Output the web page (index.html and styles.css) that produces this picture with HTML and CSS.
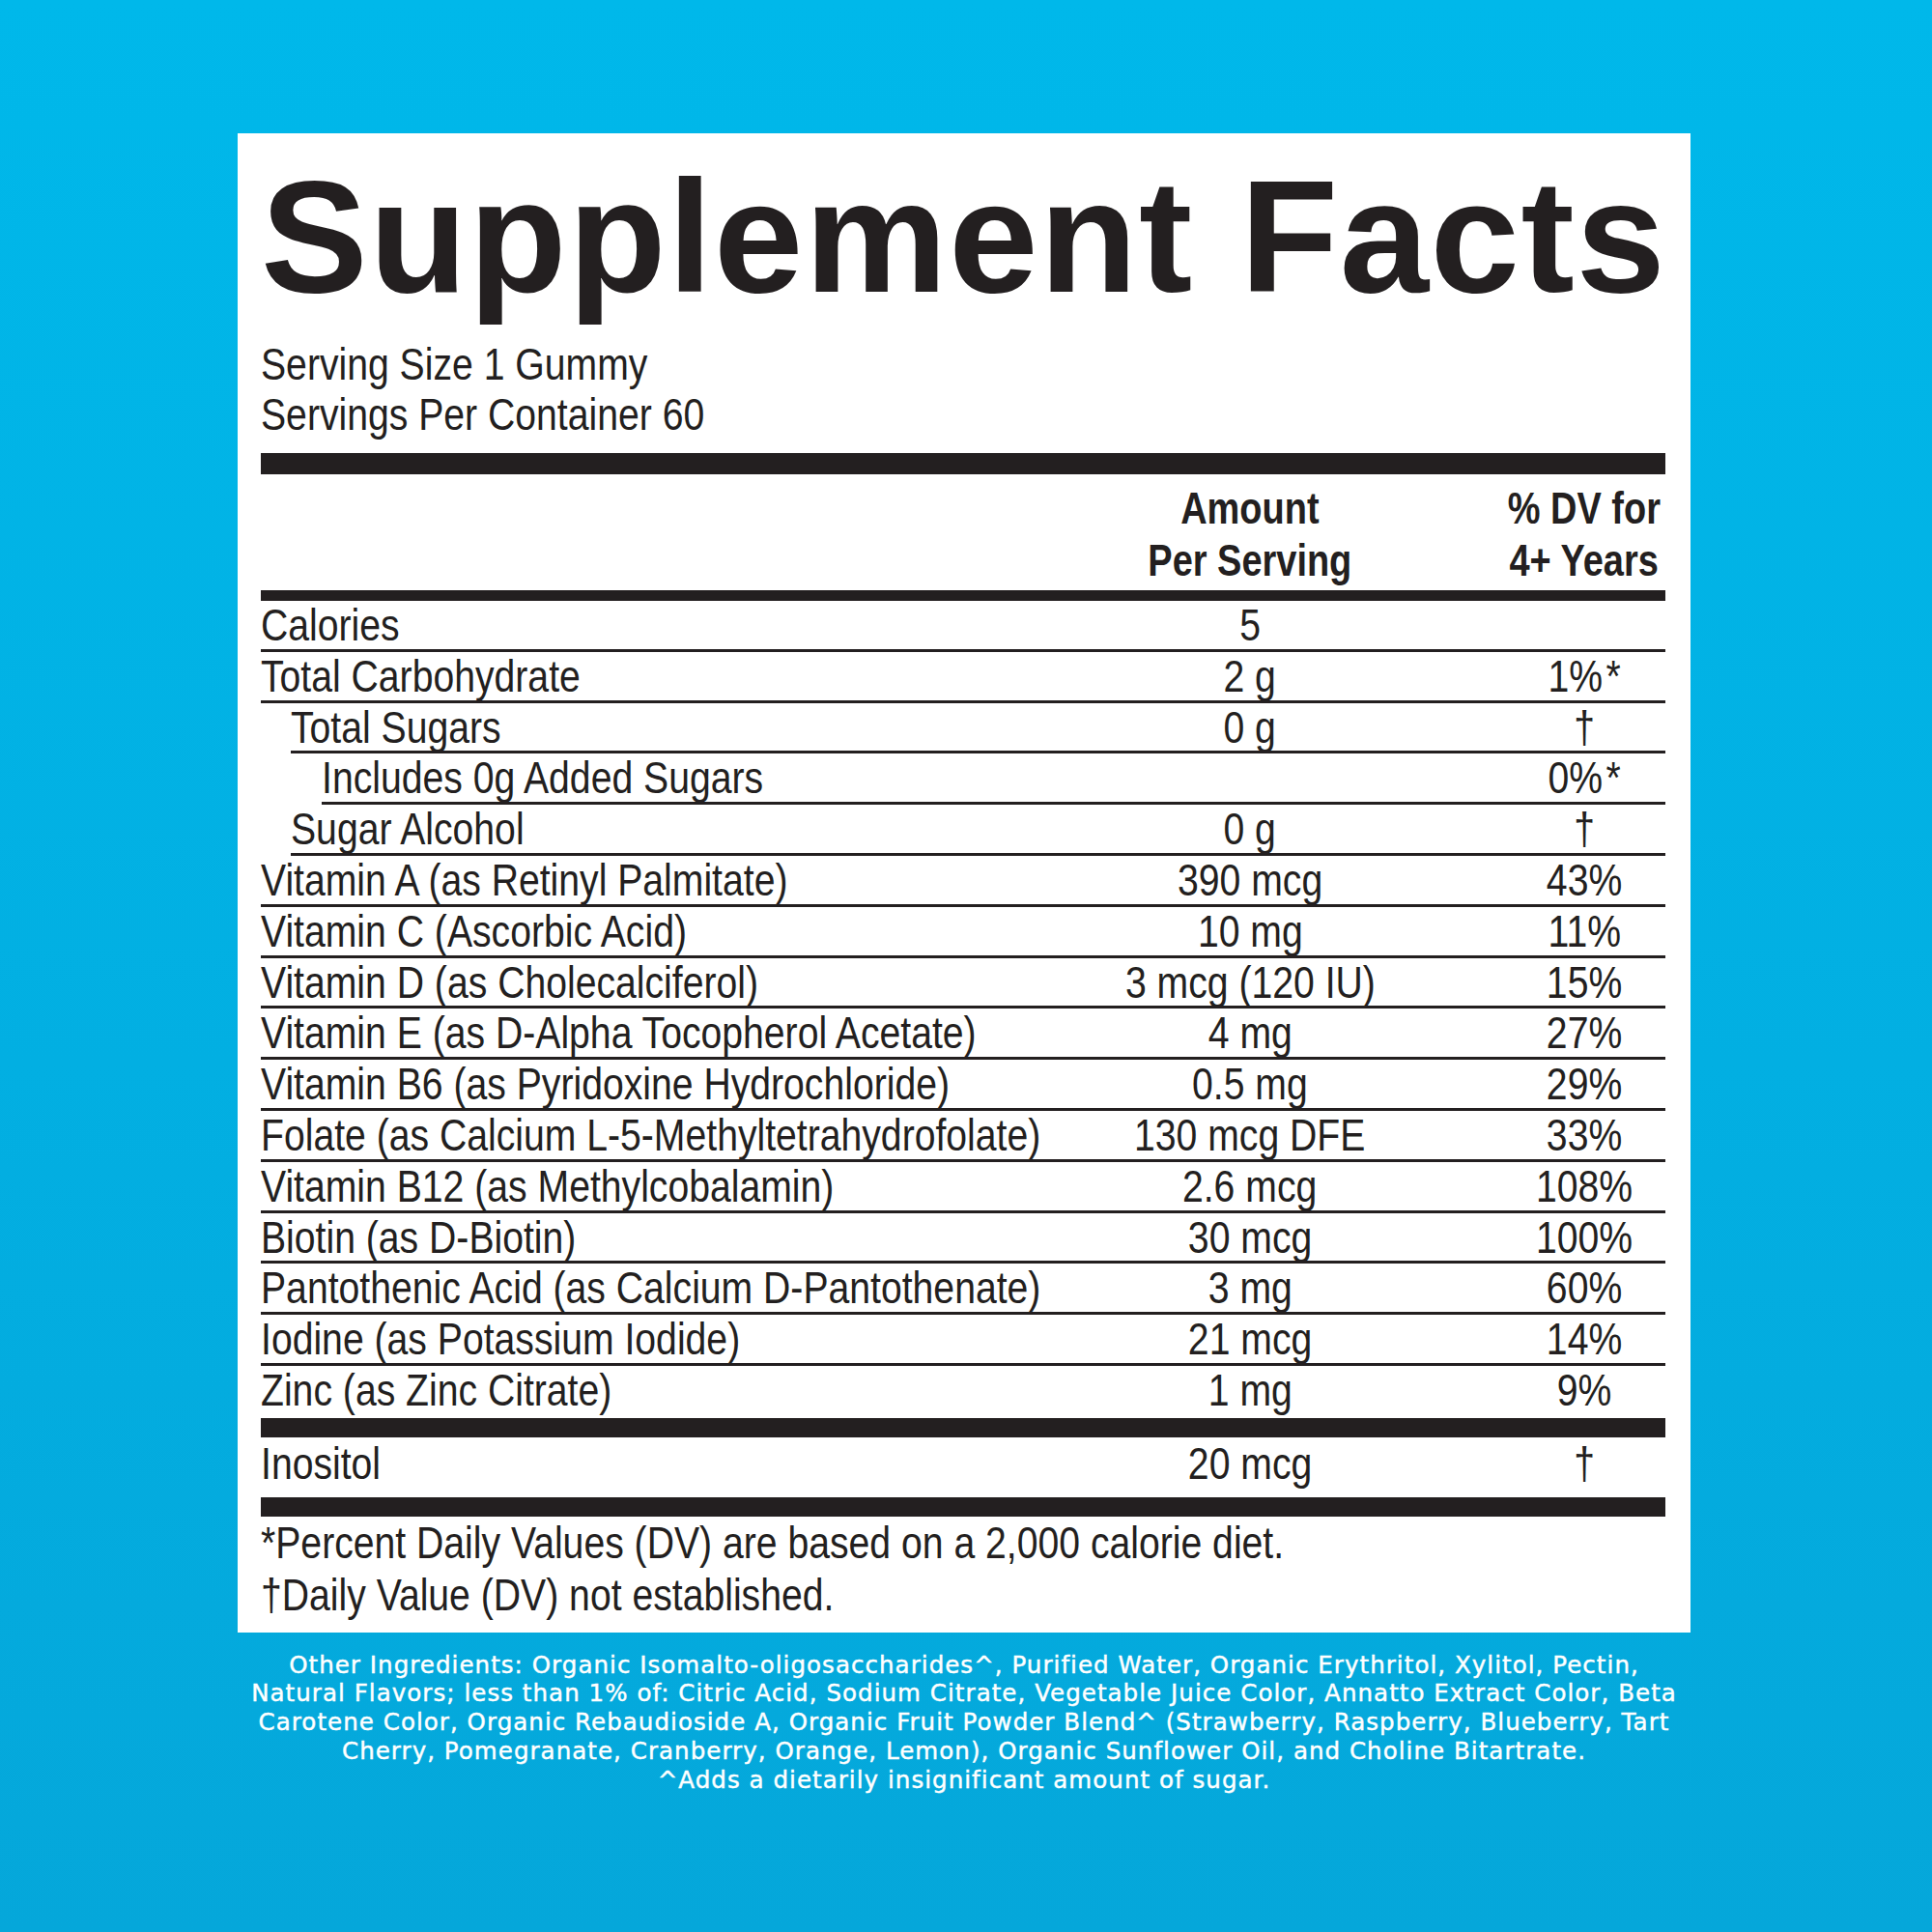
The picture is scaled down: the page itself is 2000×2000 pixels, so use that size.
FILE: index.html
```html
<!DOCTYPE html>
<html lang="en">
<head>
<meta charset="utf-8">
<title>Supplement Facts</title>
<link rel="stylesheet" href="styles.css">
</head>
<body>
<main class="page">
  <section class="panel">
    <h1 class="title">Supplement Facts</h1>
    <div class="serving">
      <div><span class="t">Serving Size 1 Gummy</span></div>
      <div><span class="t">Servings Per Container 60</span></div>
    </div>
    <div class="bar bar-top"></div>
    <div class="head">
      <div class="name"></div>
      <div class="amt"><span class="t">Amount</span><span class="t">Per Serving</span></div>
      <div class="dv"><span class="t">% DV for</span><span class="t">4+ Years</span></div>
    </div>
    <div class="bar bar-mid"></div>
    <div class="rows">
      <div class="row"><span class="name"><span class="t">Calories</span></span><span class="amt"><span class="t">5</span></span><span class="dv"></span></div>
      <div class="row"><span class="name"><span class="t">Total Carbohydrate</span></span><span class="amt"><span class="t">2 g</span></span><span class="dv"><span class="t">1%<span class="ast">*</span></span></span></div>
      <div class="row indent1"><span class="name"><span class="t">Total Sugars</span></span><span class="amt"><span class="t">0 g</span></span><span class="dv"><span class="t">†</span></span></div>
      <div class="row indent2"><span class="name"><span class="t">Includes 0g Added Sugars</span></span><span class="amt"></span><span class="dv"><span class="t">0%<span class="ast">*</span></span></span></div>
      <div class="row indent1"><span class="name"><span class="t">Sugar Alcohol</span></span><span class="amt"><span class="t">0 g</span></span><span class="dv"><span class="t">†</span></span></div>
      <div class="row"><span class="name"><span class="t">Vitamin A (as Retinyl Palmitate)</span></span><span class="amt"><span class="t">390 mcg</span></span><span class="dv"><span class="t">43%</span></span></div>
      <div class="row"><span class="name"><span class="t">Vitamin C (Ascorbic Acid)</span></span><span class="amt"><span class="t">10 mg</span></span><span class="dv"><span class="t">11%</span></span></div>
      <div class="row"><span class="name"><span class="t">Vitamin D (as Cholecalciferol)</span></span><span class="amt"><span class="t">3 mcg (120 IU)</span></span><span class="dv"><span class="t">15%</span></span></div>
      <div class="row"><span class="name"><span class="t">Vitamin E (as D-Alpha Tocopherol Acetate)</span></span><span class="amt"><span class="t">4 mg</span></span><span class="dv"><span class="t">27%</span></span></div>
      <div class="row"><span class="name"><span class="t">Vitamin B6 (as Pyridoxine Hydrochloride)</span></span><span class="amt"><span class="t">0.5 mg</span></span><span class="dv"><span class="t">29%</span></span></div>
      <div class="row"><span class="name"><span class="t">Folate (as Calcium L-5-Methyltetrahydrofolate)</span></span><span class="amt"><span class="t">130 mcg DFE</span></span><span class="dv"><span class="t">33%</span></span></div>
      <div class="row"><span class="name"><span class="t">Vitamin B12 (as Methylcobalamin)</span></span><span class="amt"><span class="t">2.6 mcg</span></span><span class="dv"><span class="t">108%</span></span></div>
      <div class="row"><span class="name"><span class="t">Biotin (as D-Biotin)</span></span><span class="amt"><span class="t">30 mcg</span></span><span class="dv"><span class="t">100%</span></span></div>
      <div class="row"><span class="name"><span class="t">Pantothenic Acid (as Calcium D-Pantothenate)</span></span><span class="amt"><span class="t">3 mg</span></span><span class="dv"><span class="t">60%</span></span></div>
      <div class="row"><span class="name"><span class="t">Iodine (as Potassium Iodide)</span></span><span class="amt"><span class="t">21 mcg</span></span><span class="dv"><span class="t">14%</span></span></div>
      <div class="row last"><span class="name"><span class="t">Zinc (as Zinc Citrate)</span></span><span class="amt"><span class="t">1 mg</span></span><span class="dv"><span class="t">9%</span></span></div>
    </div>
    <div class="bar bar-low"></div>
    <div class="row solo"><span class="name"><span class="t">Inositol</span></span><span class="amt"><span class="t">20 mcg</span></span><span class="dv"><span class="t">†</span></span></div>
    <div class="bar bar-end"></div>
    <div class="notes">
      <div><span class="t"><span class="note-ast">*</span>Percent Daily Values (DV) are based on a 2,000 calorie diet.</span></div>
      <div><span class="t">†Daily Value (DV) not established.</span></div>
    </div>
  </section>
  <div class="ingredients">
    <p>Other Ingredients: Organic Isomalto-oligosaccharides^, Purified Water, Organic Erythritol, Xylitol, Pectin,</p>
    <p>Natural Flavors; less than 1% of: Citric Acid, Sodium Citrate, Vegetable Juice Color, Annatto Extract Color, Beta</p>
    <p>Carotene Color, Organic Rebaudioside A, Organic Fruit Powder Blend^ (Strawberry, Raspberry, Blueberry, Tart</p>
    <p>Cherry, Pomegranate, Cranberry, Orange, Lemon), Organic Sunflower Oil, and Choline Bitartrate.</p>
    <p>^Adds a dietarily insignificant amount of sugar.</p>
  </div>
</main>
</body>
</html>
```

FILE: styles.css
```css
* { box-sizing: border-box; }

html, body {
  margin: 0;
  padding: 0;
}

body {
  width: 2000px;
  height: 2000px;
  background: linear-gradient(180deg, #00b8ea 0%, #02afe2 55%, #05a7da 100%);
  color: #231f20;
  font-family: "Liberation Sans", Arial, sans-serif;
}

.page {
  padding: 138px 250px 0 246px;
}

.panel {
  width: 1504px;
  background: #ffffff;
  padding: 0 26px 12px 24px;
}

.title {
  margin: 0;
  padding-top: 24px;
  font-weight: 700;
  font-size: 166px;
  line-height: 166px;
  letter-spacing: 1.6px;
  white-space: nowrap;
}

/* condensed look: the label face is a narrow grotesque */
.t {
  display: inline-block;
  white-space: nowrap;
  transform: scaleX(0.833);
  transform-origin: left center;
}

.amt .t,
.dv .t {
  transform-origin: center center;
}

.serving {
  margin-top: 23px;
  font-size: 47px;
  line-height: 52px;
}

.bar {
  background: #231f20;
}
.bar-top { height: 22px; margin-top: 14px; }
.bar-mid { height: 11px; }
.bar-low { height: 20px; margin-top: 4px; }
.bar-end { height: 20px; }

.head {
  display: flex;
  padding: 8px 0 4px;
  font-weight: 700;
  font-size: 46px;
  line-height: 54px;
}

.head .t {
  transform: scaleX(0.825);
}

.head .amt,
.head .dv {
  flex-direction: column;
  align-items: center;
}

.name {
  flex: 1;
  min-width: 0;
  white-space: nowrap;
}

.amt {
  display: flex;
  justify-content: center;
  width: 340px;
  flex: none;
}

.dv {
  display: flex;
  justify-content: center;
  width: 168px;
  flex: none;
  margin-left: 92px;
}

.row {
  display: flex;
  font-size: 47px;
  line-height: 49.8px;
  height: 52.8px;
  border-bottom: 3px solid #231f20;
}

.row.indent1 { margin-left: 31px; }
.row.indent2 { margin-left: 63px; }

.row.last {
  height: 49.8px;
  border-bottom: 0;
}

.row.solo {
  height: 62px;
  line-height: 54px;
  padding-bottom: 8px;
  border-bottom: 0;
}

.ast {
  margin-left: 4px;
}

.notes {
  font-size: 47px;
  line-height: 54px;
}

.ingredients {
  margin-top: 19px;
  width: 1504px;
  text-align: center;
  color: #ffffff;
  font-family: "DejaVu Sans", "Open Sans", sans-serif;
  font-weight: 400;
  font-size: 24.5px;
  line-height: 29.7px;
  letter-spacing: 1.05px;
  -webkit-text-stroke: 0.45px #ffffff;
  white-space: nowrap;
}

.ingredients p {
  margin: 0;
  height: 29.7px;
}
```
